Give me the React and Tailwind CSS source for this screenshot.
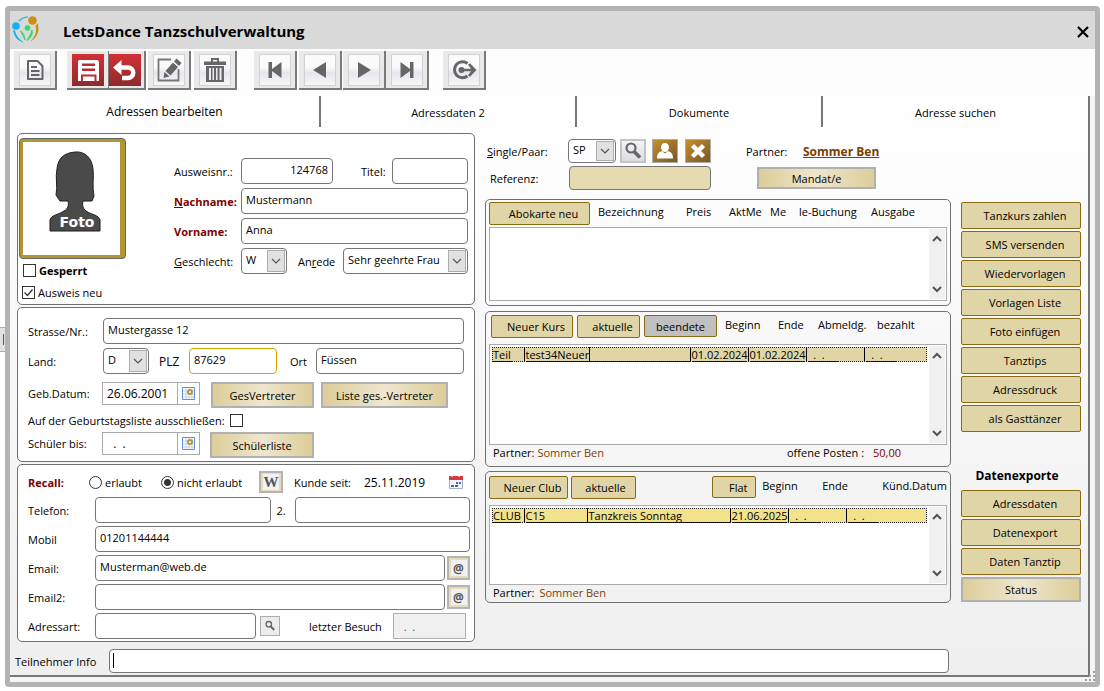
import React, { useState } from "react";
import clsx from "clsx";

const inputBase =
  "h-[26px] min-w-0 rounded-[4px] border border-[#767676] bg-white px-1 pb-1 outline-none";

const IconButton = ({ label, narrow, red, className, children }) => (
  <button
    type="button"
    aria-label={label}
    className={clsx(
      "flex h-[39px] items-center border-r-2 border-b-2 border-[#7a7a7a] bg-[#e9e9e9]",
      narrow ? "w-[37px] justify-start" : "w-[43px] justify-center",
      className
    )}
  >
    <span
      className={clsx(
        "block size-8",
        red
          ? "bg-linear-to-b from-[#d23034] to-[#8b2b2e]"
          : "border border-[#d2d2d2] bg-linear-to-b from-[#fafafa] from-40% via-[#e6e6ee] via-60% to-[#f7f7f9]"
      )}
    >
      <svg
        viewBox="0 0 32 32"
        className={clsx("size-8", !red && "-m-px")}
        fill="#666"
        stroke="none"
      >
        {children}
      </svg>
    </span>
  </button>
);

const Toolbar = () => (
  <div className="flex h-[47px] items-start bg-[#fdfdfd] pt-[2px] pl-1">
    <IconButton label="Neu">
      <path d="M9 7h9.500l5 5v13H9z" fill="none" stroke="#666" strokeWidth="2" strokeLinejoin="round" />
      <path d="M12 13h6M12 17h8.500M12 21h8.500" stroke="#666" strokeWidth="1.800" />
    </IconButton>
    <IconButton label="Speichern" red className="ml-[10px]">
      <path d="M7 6h18.500l1.500 1.500V27H6V7z" fill="#fff" />
      <path d="M10 9.500h13v2.500H10zM10 14.500h13V17H10zM9 20.500h15.500V27H9z" fill="#b52f32" />
      <path d="M11 22.500h11.500V27H11z" fill="#fff" />
    </IconButton>
    <IconButton label="Rückgängig" red narrow className="-ml-px">
      <path d="M4 13.500L12.500 6v15z" fill="#fff" />
      <path d="M11 13.500h8a5.200 5.200 0 0 1 0 10.500h-6" fill="none" stroke="#fff" strokeWidth="4.500" />
    </IconButton>
    <IconButton label="Bearbeiten" className="ml-[2px]">
      <path d="M18 5.500H5.500v21h20V15" fill="none" stroke="#777" strokeWidth="1.800" />
      <path d="M23.500 4.500l5 4.500-2.500 3-5-4.500zM20 8.500l5 4.500-7.500 8.500-5-4.500zM11.500 18l5 4.500-6 1.500z" />
    </IconButton>
    <IconButton label="Löschen" className="ml-[3px]">
      <path d="M12 4h8v3.500h7V11H5V7.500h7zM14 6v1.500h4V6z" fillRule="evenodd" />
      <path
        d="M7 12h18v16H7zM10 14v12h2V14zM13.500 14v12h1.500V14zM17 14v12h1.500V14zM20.500 14v12h2V14z"
        fillRule="evenodd"
      />
    </IconButton>
    <IconButton label="Erster" className="ml-[17px]">
      <path d="M9.500 8H13v7l9.500-7v16L13 17v7H9.500z" />
    </IconButton>
    <IconButton label="Zurück" className="ml-[2px]">
      <path d="M9 16l13-8v16z" />
    </IconButton>
    <IconButton label="Weiter" className="ml-px">
      <path d="M23 16L10 8v16z" />
    </IconButton>
    <IconButton label="Letzter">
      <path d="M22.500 8H19v7l-9.500-7v16l9.500-7v7h3.500z" />
    </IconButton>
    <IconButton label="Beenden" className="ml-[14px]">
      <path d="M19.500 9.500A8 8 0 1 0 19.500 22" fill="none" stroke="#666" strokeWidth="3" />
      <circle cx="13.500" cy="16" r="3" />
      <path d="M14 14.700h9l-3-4 2-1.500 6.500 6.800-6.500 6.800-2-1.500 3-4h-9z" />
    </IconButton>
  </div>
);

const Logo = () => (
  <svg viewBox="0 0 28 30" className="h-[30px] w-7" fill="none">
    <circle cx="20.500" cy="5.500" r="4.300" fill="#cc8f12" />
    <circle cx="4" cy="11" r="3.800" fill="#12b2ea" />
    <circle cx="15.500" cy="13" r="2.800" fill="#35dc6c" />
    <path d="M25.500 8c2.500 7 .5 14-7 18.500 3.500-4 7-9 5-15.500z" fill="#cc8f12" />
    <path d="M1 15c1 6 4 11 11 12.500C7.500 24.500 4 21 3 15.500z" fill="#12b2ea" />
    <path d="M8.500 16c2.500 1.500 4 4 4.500 9-1.500-3.500-3-6-4.500-9z" fill="#35dc6c" stroke="#35dc6c" />
    <path d="M20 15c1 4-1 8-5 10.500 1.500-3 4-6 5-10.500z" fill="#35dc6c" stroke="#35dc6c" />
    <path d="M7 6c3-3 6-4 9-4" stroke="#12b2ea" strokeWidth="1.200" />
  </svg>
);

const GoldButton = ({ active, className, children }) => (
  <button
    type="button"
    className={clsx(
      "rounded-[2px] border border-[#8a6910] pl-2",
      active ? "bg-[#c0c0c0]" : "bg-[#e0d5a7]",
      className
    )}
  >
    {children}
  </button>
);

const ShinyButton = ({ className, children }) => (
  <button
    type="button"
    className={clsx(
      "border-2 border-[#b0b0b0] bg-linear-to-r from-[#dccd98] via-[#eee6cf] to-[#dccd98]",
      className
    )}
  >
    {children}
  </button>
);

const Select = ({ id, value, className }) => (
  <div className={clsx("relative", className)}>
    <select
      id={id}
      defaultValue={value}
      className="h-full w-full appearance-none rounded-[4px] border border-[#767676] bg-white pr-5 pb-1 pl-1 outline-none"
    >
      <option>{value}</option>
    </select>
    <span className="pointer-events-none absolute inset-y-[2px] right-[2px] flex w-[18px] items-center justify-center border border-[#adadad] bg-[#e1e1e1]">
      <svg viewBox="0 0 10 6" className="h-[6px] w-[10px]" fill="none" stroke="#555" strokeWidth="1.200">
        <path d="M1 1l4 4 4-4" />
      </svg>
    </span>
  </div>
);

const CheckBox = ({ id, defaultChecked }) => (
  <span className="relative block size-[13px]">
    <input
      id={id}
      type="checkbox"
      defaultChecked={defaultChecked}
      className="peer block size-[13px] appearance-none border border-[#333] bg-white"
    />
    <svg
      viewBox="0 0 13 13"
      className="pointer-events-none absolute inset-0 hidden peer-checked:block"
      fill="none"
      stroke="#333"
      strokeWidth="1.300"
    >
      <path d="M2.500 6.500l3 3 5-6" />
    </svg>
  </span>
);

const Radio = ({ id, defaultChecked }) => (
  <input
    id={id}
    type="radio"
    name="recall"
    defaultChecked={defaultChecked}
    className="size-[13px] appearance-none rounded-full border border-[#333] bg-white checked:bg-[radial-gradient(circle,#333_0_3px,#fff_4px)]"
  />
);

const DateField = ({ id, value }) => (
  <div className="flex h-[23px] w-[98px] border border-[#ababab] bg-white">
    <input
      id={id}
      defaultValue={value}
      className="w-[75px] min-w-0 border-r border-[#ababab] px-1 text-[12px] outline-none"
    />
    <button type="button" aria-label="Kalender" className="flex flex-1 items-center justify-center">
      <svg viewBox="0 0 13 13" className="size-[13px]">
        <path d="M.5.500h12v12H.5z" fill="#fff" stroke="#5b93d3" />
        <path d="M1 4h11M1 7h11M1 10h11M4 1v11M7 1v11M10 1v11" stroke="#c3cfe6" />
        <circle cx="8" cy="5" r="2" fill="#fff" stroke="#b8943e" strokeWidth="2" />
      </svg>
    </button>
  </div>
);

const SearchIcon = ({ className }) => (
  <svg viewBox="0 0 20 20" className={className} fill="none" stroke="#666">
    <circle cx="8" cy="7" r="4.500" strokeWidth="2.200" />
    <path d="M11 10.500l6 6" strokeWidth="3.500" />
  </svg>
);

const MailButton = () => (
  <button
    type="button"
    aria-label="E-Mail senden"
    className="flex h-6 w-[23px] items-center justify-center border-2 border-[#b4b4b4] bg-[#e6dcb8]"
  >
    <span className="flex size-4 items-center justify-center bg-[#f1f1f4] text-[12px] font-bold text-[#555]">
      @
    </span>
  </button>
);

const Photo = () => (
  <button
    type="button"
    aria-label="Foto"
    className="block h-[121px] w-[107px] rounded-[4px] border border-[#666] bg-[#b39633] pt-[3px] pr-[5px] pb-[3px] pl-[3px]"
  >
    <svg viewBox="0 0 97 113" className="h-full w-full bg-white">
      <path
        d="M52 10c10-1 17 6 18 17 1 8-1 18 1 27l-2 5h-9c-1 4 0 8 3 10 6 4 13 4 14 9v11H27V78c1-5 8-5 14-9 4-2 5-6 4-10h-8l-4-6c2-9-1-17 1-26 1-11 7-16 18-17z"
        fill="#4a4a4a"
        stroke="#1f1f1f"
        strokeWidth="1"
      />
      <text
        x="54"
        y="85"
        textAnchor="middle"
        fill="#fff"
        className="font-['DejaVu_Sans',sans-serif] text-[14px] font-bold"
      >
        Foto
      </text>
    </svg>
  </button>
);

const Panel = ({ className, children }) => (
  <section className={clsx("rounded-[5px] border border-[#707070]", className)}>{children}</section>
);

const PersonPanel = () => (
  <Panel className="flex h-[172px] bg-white pl-px">
    <div className="pt-1">
      <Photo />
      <div className="mt-[3px] ml-1 flex h-4 items-center gap-[3px]">
        <CheckBox id="gesperrt" />
        <label htmlFor="gesperrt" className="font-bold">Gesperrt</label>
      </div>
      <div className="mt-[6px] ml-[3px] flex h-4 items-center gap-[3px]">
        <CheckBox id="ausweis-neu" defaultChecked />
        <label htmlFor="ausweis-neu">Ausweis neu</label>
      </div>
    </div>
    <div className="flex min-w-0 flex-1 flex-col gap-1 pt-6 pr-[6px] pl-12">
      <div className="flex items-center">
        <label htmlFor="ausweisnr" className="w-[67px]">Ausweisnr.:</label>
        <input id="ausweisnr" defaultValue="124768" className={clsx(inputBase, "w-[92px] text-right")} />
        <label htmlFor="titel" className="ml-7 w-[31px]">Titel:</label>
        <input id="titel" className={clsx(inputBase, "flex-1")} />
      </div>
      <div className="flex items-center">
        <label htmlFor="nachname" className="w-[67px] font-bold text-[#800000]">
          <u>N</u>achname:
        </label>
        <input id="nachname" defaultValue="Mustermann" className={clsx(inputBase, "flex-1")} />
      </div>
      <div className="flex items-center">
        <label htmlFor="vorname" className="w-[67px] font-bold text-[#800000]">Vorname:</label>
        <input id="vorname" defaultValue="Anna" className={clsx(inputBase, "flex-1")} />
      </div>
      <div className="flex items-center">
        <label htmlFor="geschlecht" className="w-[67px]">
          <u>G</u>eschlecht:
        </label>
        <Select id="geschlecht" value="W" className="h-[26px] w-[46px]" />
        <label htmlFor="anrede" className="ml-[11px] w-[45px]">
          An<u>r</u>ede
        </label>
        <Select id="anrede" value="Sehr geehrte Frau" className="h-[26px] flex-1" />
      </div>
    </div>
  </Panel>
);

const AddressPanel = () => (
  <Panel className="mt-[2px] h-[155px] bg-white pt-[10px] pr-[10px] pl-[10px]">
    <div className="flex items-center">
      <label htmlFor="strasse" className="w-[75px]">Strasse/Nr.:</label>
      <input id="strasse" defaultValue="Mustergasse 12" className={clsx(inputBase, "flex-1")} />
    </div>
    <div className="mt-1 flex items-center">
      <label htmlFor="land" className="w-[75px]">Land:</label>
      <Select id="land" value="D" className="h-[26px] w-[46px]" />
      <label htmlFor="plz" className="ml-[10px] w-[30px] text-[12px]">PLZ</label>
      <input id="plz" defaultValue="87629" className={clsx(inputBase, "w-[88px] border-[#d9a400]!")} />
      <label htmlFor="ort" className="ml-[13px] w-[26px]">Ort</label>
      <input id="ort" defaultValue="Füssen" className={clsx(inputBase, "flex-1")} />
    </div>
    <div className="mt-2 flex items-start">
      <label htmlFor="geb" className="w-[74px] leading-[23px]">Geb.Datum:</label>
      <DateField id="geb" value="26.06.2001" />
      <ShinyButton className="ml-[11px] h-[26px] w-[103px]">GesVertreter</ShinyButton>
      <ShinyButton className="ml-[7px] h-[26px] w-[127px]">Liste ges.-Vertreter</ShinyButton>
    </div>
    <div className="flex h-6 items-center gap-[5px]">
      <label htmlFor="geburtstagsliste">Auf der Geburtstagsliste ausschließen:</label>
      <CheckBox id="geburtstagsliste" />
    </div>
    <div className="flex items-start">
      <label htmlFor="schueler" className="w-[74px] leading-[23px]">Schüler bis:</label>
      <DateField id="schueler" value="  .  ." />
      <ShinyButton className="ml-[10px] h-[26px] w-[104px]">Schülerliste</ShinyButton>
    </div>
  </Panel>
);

const ContactPanel = () => (
  <Panel className="mt-[2px] flex h-[178px] flex-col gap-[3px] bg-white pt-[5px] pr-[4px] pl-[10px]">
    <div className="flex h-6 items-center">
      <span className="w-[61px] font-bold text-[#800000]">Recall:</span>
      <Radio id="erlaubt" />
      <label htmlFor="erlaubt" className="ml-[3px] w-14">erlaubt</label>
      <Radio id="nicht-erlaubt" defaultChecked />
      <label htmlFor="nicht-erlaubt" className="ml-[3px] w-[82px]">nicht erlaubt</label>
      <button
        type="button"
        aria-label="Word"
        className="flex h-[22px] w-6 items-center justify-center border-2 border-[#b4b4b4] bg-[#e6dcb8]"
      >
        <span className="flex h-4 w-4 items-center justify-center bg-[#f1f1f4] font-['Liberation_Serif',serif] text-[15px] font-bold text-[#555]">
          W
        </span>
      </button>
      <span className="ml-[11px] w-[70px]">Kunde seit:</span>
      <span className="w-[85px] text-[12px]">25.11.2019</span>
      <svg viewBox="0 0 14 14" className="size-[14px]">
        <path d="M.5 2h13v11.500H.5z" fill="#f4f5fa" stroke="#a9aebd" />
        <path d="M0 1h14v4H0z" fill="#d9393d" />
        <path d="M3 0v2M10 0v2" stroke="#fff" />
        <path d="M7 7h2v2H7zM10 7h2v2h-2zM2 10h3v2H2zM6 10h3v2H6z" fill="#3f62c4" />
      </svg>
    </div>
    <div className="flex items-center">
      <label htmlFor="telefon" className="w-[67px]">Telefon:</label>
      <input id="telefon" className={clsx(inputBase, "flex-1")} />
      <label htmlFor="telefon2" className="ml-[6px] w-[18px]">2.</label>
      <input id="telefon2" className={clsx(inputBase, "flex-1")} />
    </div>
    <div className="flex items-center">
      <label htmlFor="mobil" className="w-[67px]">Mobil</label>
      <input id="mobil" defaultValue="01201144444" className={clsx(inputBase, "flex-1")} />
    </div>
    <div className="flex items-center">
      <label htmlFor="email" className="w-[67px]">Email:</label>
      <input id="email" defaultValue="Musterman@web.de" className={clsx(inputBase, "mr-[2px] flex-1")} />
      <MailButton />
    </div>
    <div className="flex items-center">
      <label htmlFor="email2" className="w-[67px]">Email2:</label>
      <input id="email2" className={clsx(inputBase, "mr-[2px] flex-1")} />
      <MailButton />
    </div>
    <div className="flex items-center pr-1">
      <label htmlFor="adressart" className="w-[67px]">Adressart:</label>
      <input id="adressart" className={clsx(inputBase, "flex-1")} />
      <button
        type="button"
        aria-label="Adressart suchen"
        className="ml-1 flex size-5 items-center justify-center border border-[#adadad] bg-[#ececf0]"
      >
        <SearchIcon className="size-3" />
      </button>
      <label htmlFor="besuch" className="ml-[29px] w-[84px]">letzter Besuch</label>
      <input
        id="besuch"
        readOnly
        value="  .  ."
        className="h-[26px] w-[73px] border border-[#adadad] bg-[#f0f0f0] px-1 text-[#555] outline-none"
      />
    </div>
  </Panel>
);

const ScrollBar = () => (
  <div className="flex w-4 flex-col items-center justify-between bg-[#f0f0f0] py-[6px]">
    <svg viewBox="0 0 10 7" className="h-[7px] w-[10px]" fill="none" stroke="#555" strokeWidth="2">
      <path d="M1 6l4-4 4 4" />
    </svg>
    <svg viewBox="0 0 10 7" className="h-[7px] w-[10px]" fill="none" stroke="#555" strokeWidth="2">
      <path d="M1 1l4 4 4-4" />
    </svg>
  </div>
);

const ListBox = ({ className, children }) => (
  <div className={clsx("flex border border-[#ababab] bg-white p-px", className)}>
    <div className="min-w-0 flex-1 pt-px pr-[2px] pl-px">{children}</div>
    <ScrollBar />
  </div>
);

// cells: [column width class, text, underline width class]
const ListRow = ({ label, color, cells }) => (
  <table
    aria-label={label}
    className={clsx("w-full table-fixed border-collapse outline-1 -outline-offset-1 outline-dotted outline-[#222]", color)}
  >
    <tbody>
      <tr className="h-[15px]">
        {cells.map(([width, text, line], i) => (
          <td key={i} className={clsx("p-0", width, i > 0 && "border-l border-black")}>
            <span
              className={clsx(
                "ml-px block h-[14px] border-b border-black leading-[14px] whitespace-pre",
                line
              )}
            >
              {text}
            </span>
          </td>
        ))}
      </tr>
    </tbody>
  </table>
);

const courseCells = [
  ["w-8", "Teil", "w-[19px]"],
  ["w-[65px]", "test34Neuer", "w-full"],
  ["w-[101px]", "", "w-full"],
  ["w-[58px]", "01.02.2024", "w-[55px]"],
  ["w-[58px]", "01.02.2024", "w-[55px]"],
  ["w-[58px]", "  .  .", "w-[30px]"],
  ["", "  .  .", "w-[30px]"],
];

const clubCells = [
  ["w-8", "CLUB", "w-7"],
  ["w-[63px]", "C15", "w-full"],
  ["w-[143px]", "Tanzkreis Sonntag", "w-full"],
  ["w-[58px]", "21.06.2025", "w-[55px]"],
  ["w-[58px]", "  .  .", "w-[30px]"],
  ["", "  .  .", "w-[30px]"],
];

const PartnerHead = () => (
  <div className="pt-[6px]">
    <div className="flex h-6 items-center pl-[2px]">
      <label htmlFor="single-paar" className="w-[81px]">
        <u>S</u>ingle/Paar:
      </label>
      <Select id="single-paar" value="SP" className="h-6 w-12" />
      <button
        type="button"
        aria-label="Partner suchen"
        className="ml-1 flex h-6 w-[26px] items-center justify-center border-2 border-[#c4c4c4] bg-linear-to-b from-[#f4f4f4] to-[#dcdce2]"
      >
        <SearchIcon className="size-5" />
      </button>
      <button
        type="button"
        aria-label="Partner anzeigen"
        className="ml-[6px] h-6 w-[26px] border border-[#adadad] bg-linear-to-br from-[#c98f2c] to-[#75592a]"
      >
        <svg viewBox="0 0 24 22" className="h-[22px] w-6" fill="#fff">
          <path d="M12 3c2.500 0 4 2 4 4.500S14 12 12 12 8 10 8 7.500 9.500 3 12 3z" />
          <path d="M4 18.500c0-5 2-6.500 5-7.500l3 2.500 3-2.500c3 1 5 2.500 5 7.500z" />
        </svg>
      </button>
      <button
        type="button"
        aria-label="Partner entfernen"
        className="ml-[7px] h-6 w-[26px] border border-[#adadad] bg-linear-to-br from-[#c98f2c] to-[#75592a]"
      >
        <svg viewBox="0 0 24 22" className="h-[22px] w-6" stroke="#fff" strokeWidth="4.500">
          <path d="M6.500 5.500l11 11M17.500 5.500l-11 11" />
        </svg>
      </button>
      <span className="ml-[35px] w-[57px]">Partner:</span>
      <a href="#partner" className="text-[12px] font-bold text-[#7b3f00] underline">Sommer Ben</a>
    </div>
    <div className="mt-[3px] flex h-6 items-center pl-[5px]">
      <label htmlFor="referenz" className="w-[79px]">Referenz:</label>
      <input
        id="referenz"
        className="h-6 w-[142px] rounded-[4px] border border-[#767676] bg-[#e6dab1] px-1 outline-none"
      />
      <ShinyButton className="ml-[46px] h-[22px] w-[119px]">Mandat/e</ShinyButton>
    </div>
  </div>
);

const MiddleColumn = () => (
  <div>
    <PartnerHead />
    <Panel className="mt-[9px] h-[107px] px-[3px] pt-[2px]">
      <div className="flex h-[23px] items-start">
        <GoldButton className="h-[23px] w-[101px]">Abokarte neu</GoldButton>
        <span className="ml-2 w-[88px] pt-[2px]">Bezeichnung</span>
        <span className="w-[43px] pt-[2px]">Preis</span>
        <span className="w-[41px] pt-[2px]">AktMe</span>
        <span className="w-[29px] pt-[2px]">Me</span>
        <span className="w-[72px] pt-[2px] whitespace-nowrap">le-Buchung</span>
        <span className="pt-[2px]">Ausgabe</span>
      </div>
      <ListBox className="mt-[2px] h-[74px]" />
    </Panel>

    <Panel className="mt-[5px] h-[156px] px-[3px] pt-[3px]">
      <div className="flex h-[23px] items-start pl-[2px]">
        <GoldButton className="h-[23px] w-[82px]">Neuer Kurs</GoldButton>
        <GoldButton className="ml-1 h-[23px] w-[63px]">aktuelle</GoldButton>
        <GoldButton active className="ml-1 h-[22px] w-[73px] pl-0!">beendete</GoldButton>
        <span className="ml-2 w-[53px] pt-[2px]">Beginn</span>
        <span className="w-10 pt-[2px]">Ende</span>
        <span className="w-[59px] pt-[2px]">Abmeldg.</span>
        <span className="pt-[2px]">bezahlt</span>
      </div>
      <ListBox className="mt-[6px] h-[101px]">
        <ListRow label="Kurse" color="bg-[#e0d5a7]" cells={courseCells} />
      </ListBox>
      <div className="flex items-center pl-1">
        <span>Partner:</span>
        <span className="ml-[3px] flex-1 text-[#7b3f00]">Sommer Ben</span>
        <span className="w-[86px]">offene Posten :</span>
        <span className="w-[74px] text-[#800000]">50,00</span>
      </div>
    </Panel>

    <Panel className="mt-1 h-[132px] px-[3px] pt-1">
      <div className="flex h-[23px] items-start">
        <GoldButton className="h-[23px] w-[79px]">Neuer Club</GoldButton>
        <GoldButton className="ml-[3px] h-[23px] w-[65px] pl-1!">aktuelle</GoldButton>
        <GoldButton className="ml-auto h-[22px] w-11">Flat</GoldButton>
        <span className="ml-[6px] w-[60px] pt-[2px]">Beginn</span>
        <span className="w-[60px] pt-[2px]">Ende</span>
        <span className="pt-[2px]">Künd.Datum</span>
      </div>
      <ListBox className="mt-[6px] h-20">
        <ListRow label="Clubs" color="bg-[#f2e28b]" cells={clubCells} />
      </ListBox>
      <div className="flex items-center pl-1">
        <span>Partner:</span>
        <span className="ml-[5px] text-[#7b3f00]">Sommer Ben</span>
      </div>
    </Panel>
  </div>
);

const actions = [
  "Tanzkurs zahlen",
  "SMS versenden",
  "Wiedervorlagen",
  "Vorlagen Liste",
  "Foto einfügen",
  "Tanztips",
  "Adressdruck",
  "als Gasttänzer",
];

const exportsList = ["Adressdaten", "Datenexport", "Daten Tanztip"];

const SideActions = () => (
  <div className="flex flex-col pt-[69px]">
    <div className="flex flex-col gap-[2px]">
      {actions.map((a) => (
        <GoldButton key={a} className="h-[27px]">{a}</GoldButton>
      ))}
    </div>
    <h2 className="mt-8 h-[23px] pr-2 text-center text-[12px] leading-[23px] font-bold">Datenexporte</h2>
    <div className="mt-[3px] flex flex-col gap-[2px]">
      {exportsList.map((a) => (
        <GoldButton key={a} className="h-[27px]">{a}</GoldButton>
      ))}
      <ShinyButton className="h-[25px]">Status</ShinyButton>
    </div>
  </div>
);

const tabs = ["Adressen bearbeiten", "Adressdaten 2", "Dokumente", "Adresse suchen"];

const App = () => {
  const [tab, setTab] = useState(tabs[0]);

  return (
    <div className="relative min-h-screen bg-white pt-[6px] pr-1 pb-[3px] pl-[5px] font-['Open_Sans',sans-serif] text-[11px] leading-[15px] text-black">
      {/* edge of the window behind */}
      <span className="absolute top-[327px] left-0 h-[25px] w-[5px] border-y border-[#adadad] bg-[#e1e1e1] py-[6px] pl-[3px]">
        <span className="block h-full w-px bg-[#a33]" />
      </span>

      <div className="rounded-[4px] border-5 border-[#b3b3b3] bg-[#f6f6f6]">
        <header className="flex h-[38px] items-center bg-[#d9d9d9] pr-[6px] pl-[2px]">
          <Logo />
          <h1 className="ml-[23px] flex-1 pt-[2px] text-[15px] leading-5 font-bold">LetsDance Tanzschulverwaltung</h1>
          <button type="button" aria-label="Schließen" className="pt-1">
            <svg viewBox="0 0 12 12" className="size-3" stroke="#000" strokeWidth="2.200">
              <path d="M1 1l10 10M11 1L1 11" />
            </svg>
          </button>
        </header>
        <Toolbar />

        <div className="mr-[5px] mb-[5px] border-r-2 border-b-2 border-[#777] bg-linear-to-b from-white to-[#efefef]">
          <div role="tablist" className="grid h-[31px] grid-cols-[311fr_256fr_246fr_265fr]">
            {tabs.map((t, i) => (
              <button
                key={t}
                type="button"
                role="tab"
                aria-selected={tab === t}
                onClick={() => setTab(t)}
                className={clsx(
                  tab === t ? "text-[12px]" : "pt-[2px] text-[11px]",
                  i < 3 && "border-r-2 border-[#777]"
                )}
              >
                {t}
              </button>
            ))}
          </div>

          <div className="grid grid-cols-[minmax(0,458fr)_minmax(0,466fr)_minmax(0,120fr)] gap-x-[10px] pt-[6px] pr-[7px] pl-[7px]">
            <div>
              <PersonPanel />
              <AddressPanel />
              <ContactPanel />
            </div>
            <MiddleColumn />
            <SideActions />
          </div>

          <div className="flex items-center pt-[7px] pr-[139px] pb-[2px] pl-[5px]">
            <label htmlFor="info" className="w-[94px]">Teilnehmer Info</label>
            <div className="relative flex-1">
              <input
                id="info"
                className="block h-6 w-full rounded-[4px] border border-[#767676] bg-white px-1 outline-none"
              />
              <span className="absolute top-1 left-1 h-[15px] w-px bg-black" />
            </div>
          </div>
        </div>
      </div>
      <svg viewBox="0 0 10 10" className="absolute right-[9px] bottom-[10px] size-[10px]" fill="#a0a0a0">
        <path d="M8 0h2v2H8zM4 4h2v2H4zM8 4h2v2H8zM0 8h2v2H0zM4 8h2v2H4zM8 8h2v2H8z" />
      </svg>
    </div>
  );
};

export default App;
